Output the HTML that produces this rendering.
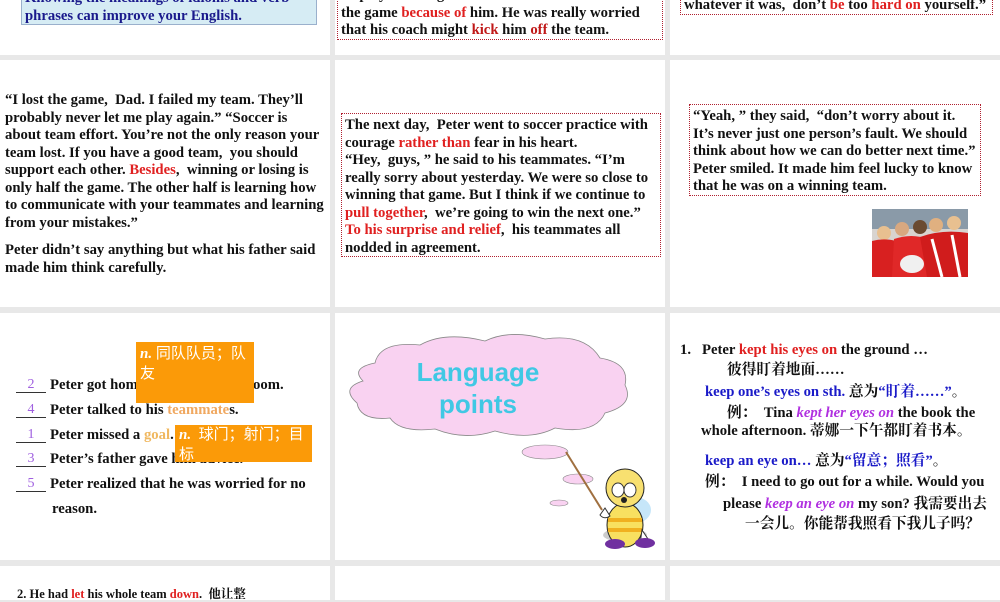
<!DOCTYPE html>
<html><head><meta charset="utf-8"><style>
*{margin:0;padding:0;box-sizing:border-box}
body{width:1000px;height:600px;overflow:hidden;background:#e8e8e8;position:relative;font-family:"Liberation Serif","Noto Serif CJK SC",serif;font-weight:bold;color:#111}
.s{position:absolute;background:#fff}
.a{position:absolute;white-space:nowrap}
.t{font-size:14.7px;line-height:17.5px}
.r{color:#e02020}
.dr{color:#c01818}
.box{position:absolute;border:1.2px dotted #b02030}
.cn{font-family:"Liberation Serif","Noto Serif CJK SC",serif;font-weight:bold}
.bl{color:#1a1ac8}
.pu{color:#b030e0;font-style:italic}
.or{position:absolute;background:#fb9a08;color:#fff;font-size:15px;line-height:20px;padding:2px 4px;font-family:"Liberation Serif","Noto Sans CJK SC",sans-serif;font-weight:normal;white-space:normal;word-break:break-all}
.or i{font-weight:bold}
.num{position:absolute;width:30px;border-bottom:1px solid #333;text-align:center;color:#a060e0;font-weight:normal;font-size:14px;line-height:14px}
</style></head><body>
<div class="s" style="left:0;top:0;width:330px;height:55px"></div>
<div class="s" style="left:335px;top:0;width:330px;height:55px"></div>
<div class="s" style="left:670px;top:0;width:330px;height:55px"></div>
<div class="s" style="left:0;top:60px;width:330px;height:247px"></div>
<div class="s" style="left:335px;top:60px;width:330px;height:247px"></div>
<div class="s" style="left:670px;top:60px;width:330px;height:247px"></div>
<div class="s" style="left:0;top:313px;width:330px;height:247px"></div>
<div class="s" style="left:335px;top:313px;width:330px;height:247px"></div>
<div class="s" style="left:670px;top:313px;width:330px;height:247px"></div>
<div class="s" style="left:0;top:566px;width:330px;height:34px"></div>
<div class="s" style="left:335px;top:566px;width:330px;height:34px"></div>
<div class="s" style="left:670px;top:566px;width:330px;height:34px"></div>

<!-- row1 -->
<div class="a" style="left:21px;top:-10px;width:296px;height:35px;background:#d6ecf4;border:1px solid #9ab0cc"></div>
<div class="a t" style="left:25px;top:-10px;color:#1a1a8c">Knowing the meanings of idioms and verb<br>phrases can improve your English.</div>
<div class="box" style="left:337px;top:-10px;width:326px;height:50px"></div>
<div class="a t" style="left:341px;top:-13px">he played a song that let his teammates down<br>the game <span class="r">because of</span> him. He was really worried<br>that his coach might <span class="dr">kick</span> him <span class="dr">off</span> the team.</div>
<div class="box" style="left:680px;top:-10px;width:313px;height:25px"></div>
<div class="a t" style="left:684px;top:-3px">whatever it was,&nbsp; don’t <span class="r">be</span> too <span class="r">hard on</span> yourself.”</div>

<!-- row2 -->
<div class="a t" style="left:5px;top:92px">“I lost the game,&nbsp; Dad. I failed my team. They’ll<br>probably never let me play again.” “Soccer is<br>about team effort. You’re not the only reason your<br>team lost. If you have a good team,&nbsp; you should<br>support each other. <span class="r">Besides</span>,&nbsp; winning or losing is<br>only half the game. The other half is learning how<br>to communicate with your teammates and learning<br>from your mistakes.”</div>
<div class="a t" style="left:5px;top:242px">Peter didn’t say anything but what his father said<br>made him think carefully.</div>
<div class="box" style="left:341px;top:113px;width:320px;height:144px"></div>
<div class="a t" style="left:345px;top:117px">The next day,&nbsp; Peter went to soccer practice with<br>courage <span class="r">rather than</span> fear in his heart.<br>“Hey,&nbsp; guys, ” he said to his teammates. “I’m<br>really sorry about yesterday. We were so close to<br>winning that game. But I think if we continue to<br><span class="r">pull together</span>,&nbsp; we’re going to win the next one.”<br><span class="r">To his surprise and relief</span>,&nbsp; his teammates all<br>nodded in agreement.</div>
<div class="box" style="left:689px;top:104px;width:292px;height:92px"></div>
<div class="a t" style="left:693px;top:108px">“Yeah, ” they said,&nbsp; “don’t worry about it.<br>It’s never just one person’s fault. We should<br>think about how we can do better next time.”<br>Peter smiled. It made him feel lucky to know<br>that he was on a winning team.</div>
<svg class="a" style="left:872px;top:209px" width="96" height="68" viewBox="0 0 96 68">
<rect width="96" height="68" fill="#d8d4d0"/>
<rect x="0" y="0" width="96" height="20" fill="#8a9aa8"/>
<circle cx="12" cy="24" r="7" fill="#e8c090"/><circle cx="30" cy="20" r="7" fill="#d8a880"/><circle cx="48" cy="18" r="7" fill="#6a4a30"/><circle cx="64" cy="16" r="7" fill="#e0b080"/><circle cx="82" cy="14" r="7" fill="#e8c090"/>
<path d="M0 32 Q15 28 30 34 L40 68 L0 68Z" fill="#d82020"/>
<path d="M22 30 Q40 24 55 30 L60 68 L20 68Z" fill="#e02828"/>
<path d="M48 28 Q70 20 96 24 L96 68 L55 68Z" fill="#d01c1c"/>
<path d="M60 30 L70 68 M80 26 L88 68" stroke="#fff" stroke-width="3"/>
<ellipse cx="40" cy="55" rx="12" ry="9" fill="#f0f0f0"/>
</svg>

<!-- row3 slide1 -->
<div class="num" style="left:16px;top:378px">2</div>
<div class="a t" style="left:50px;top:377px">Peter got home and went to his room.</div>
<div class="num" style="left:16px;top:403px">4</div>
<div class="a t" style="left:50px;top:402px">Peter talked to his <span style="color:#f0a860">teammate</span>s.</div>
<div class="num" style="left:16px;top:428px">1</div>
<div class="a t" style="left:50px;top:427px">Peter missed a <span style="color:#f0b860">goal</span>.</div>
<div class="num" style="left:16px;top:452px">3</div>
<div class="a t" style="left:50px;top:451px">Peter’s father gave him advice.</div>
<div class="num" style="left:16px;top:477px">5</div>
<div class="a t" style="left:50px;top:476px">Peter realized that he was worried for no</div>
<div class="a t" style="left:52px;top:501px">reason.</div>
<div class="or" style="left:136px;top:342px;width:118px;height:61px"><i>n.</i> 同队队员；队友</div>
<div class="or" style="left:175px;top:425px;width:137px;height:37px;padding-top:0"><i>n.</i>&nbsp; 球门；射门；目标</div>

<!-- row3 slide2 -->
<svg class="a" style="left:345px;top:333px" width="290" height="105" viewBox="0 0 290 105">
<path d="M30 30 Q35 8 75 12 Q100 -2 140 8 Q165 -4 200 6 Q240 0 255 25 Q285 30 280 52 Q290 72 260 80 Q250 102 210 95 Q185 108 150 98 Q120 108 90 96 Q55 100 45 85 Q15 88 12 70 Q-5 55 18 48 Q5 35 30 30Z" fill="#f9d2f1" stroke="#888" stroke-width="0.8"/>
<text x="133" y="48" text-anchor="middle" font-family="Liberation Sans,sans-serif" font-size="26" font-weight="bold" fill="#40c8e4">Language</text>
<text x="133" y="80" text-anchor="middle" font-family="Liberation Sans,sans-serif" font-size="26" font-weight="bold" fill="#40c8e4">points</text>
</svg>
<svg class="a" style="left:520px;top:440px" width="140" height="110" viewBox="0 0 140 110">
<ellipse cx="25" cy="12" rx="23" ry="7" fill="#f9d2f1" stroke="#888" stroke-width="0.6"/>
<ellipse cx="58" cy="39" rx="15" ry="5" fill="#f9d2f1" stroke="#888" stroke-width="0.6"/>
<ellipse cx="39" cy="63" rx="9" ry="3" fill="#f9d2f1" stroke="#888" stroke-width="0.6"/>
<line x1="46" y1="12" x2="82" y2="70" stroke="#a07040" stroke-width="2"/>
<ellipse cx="115" cy="70" rx="16" ry="13" fill="#b8e0f8" opacity="0.8"/>
<ellipse cx="105" cy="95" rx="22" ry="7" fill="#ccc"/>
<ellipse cx="105" cy="85" rx="18" ry="22" fill="#f8e060" stroke="#222"/>
<path d="M88 80 H122 M88 90 H122" stroke="#f0b020" stroke-width="4"/>
<circle cx="105" cy="48" r="19" fill="#f8e070" stroke="#222"/>
<ellipse cx="98" cy="50" rx="6" ry="7" fill="#fff" stroke="#333"/><ellipse cx="110" cy="50" rx="6" ry="7" fill="#fff" stroke="#333"/>
<circle cx="104" cy="60" r="3" fill="#222"/>
<path d="M85 68 L80 75 Q84 80 90 76Z" fill="#fff" stroke="#333"/>
<path d="M122 90 L130 102 L120 104Z" fill="#fff" stroke="#333"/>
<ellipse cx="95" cy="104" rx="10" ry="5" fill="#7030a0"/><ellipse cx="125" cy="103" rx="10" ry="5" fill="#7030a0"/>
</svg>

<!-- row3 slide3 -->
<div class="a t" style="left:680px;top:342px">1.&nbsp;&nbsp; Peter <span class="r">kept his eyes on</span> the ground …</div>
<div class="a t cn" style="left:727px;top:362px">彼得盯着地面……</div>
<div class="a t" style="left:705px;top:384px"><span class="bl">keep one’s eyes on sth.</span> <span class="cn">意为</span><span class="bl cn">“盯着……”</span><span class="cn">。</span></div>
<div class="a t" style="left:727px;top:405px"><span class="cn">例：</span>&nbsp; Tina <span class="pu">kept her eyes on</span> the book the</div>
<div class="a t" style="left:701px;top:423px">whole afternoon. <span class="cn">蒂娜一下午都盯着书本。</span></div>
<div class="a t" style="left:705px;top:453px"><span class="bl">keep an eye on…</span> <span class="cn">意为</span><span class="bl cn">“留意；照看”</span><span class="cn">。</span></div>
<div class="a t" style="left:705px;top:474px"><span class="cn">例：</span>&nbsp; I need to go out for a while. Would you</div>
<div class="a t" style="left:723px;top:496px">please <span class="pu">keep an eye on</span> my son? <span class="cn">我需要出去</span></div>
<div class="a t cn" style="left:745px;top:516px">一会儿。你能帮我照看下我儿子吗？</div>

<!-- row4 -->
<div class="a" style="left:17px;top:584px;font-size:12.5px">2. He had <span class="r">let</span> his whole team <span class="r">down</span>.&nbsp; <span class="cn">他让整</span></div>
</body></html>
